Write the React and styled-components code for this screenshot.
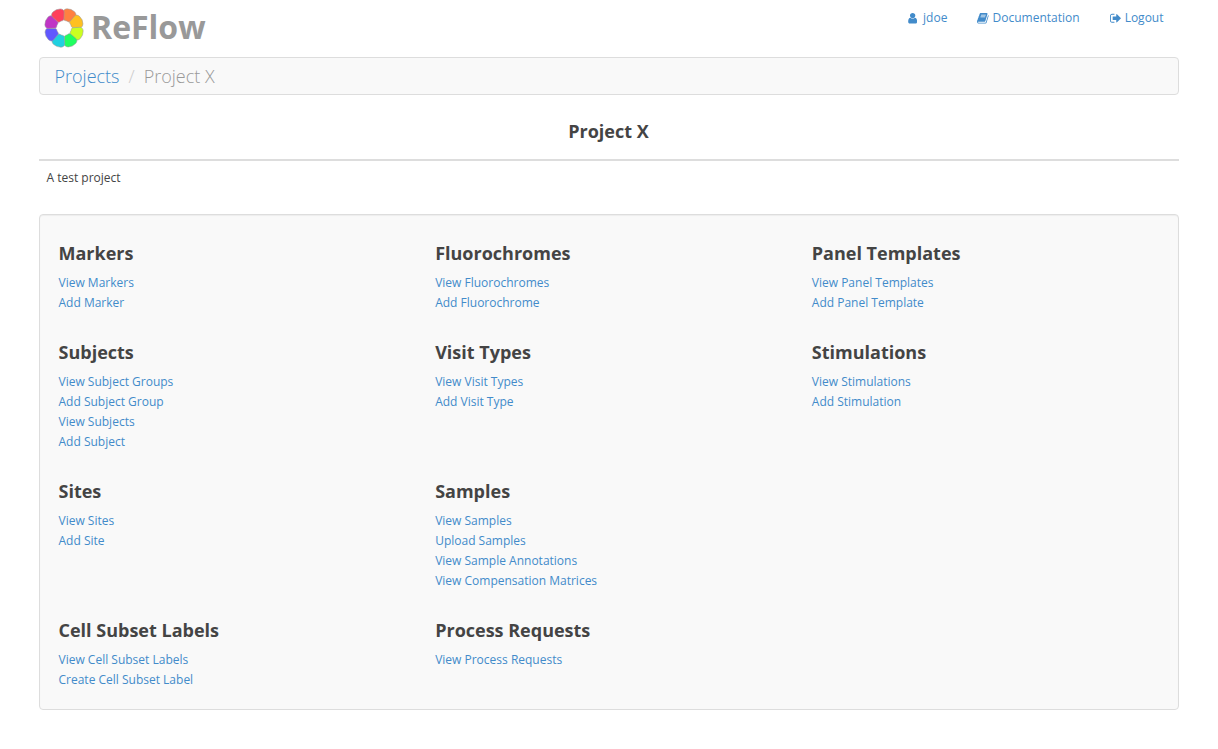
import React from "react";
import styled, { createGlobalStyle } from "styled-components";

const GlobalStyle = createGlobalStyle`
  *, *::before, *::after { box-sizing: border-box; }
  body {
    margin: 0;
    background: #fff;
    color: #444;
    font: 12px/20px "Open Sans", sans-serif;
  }
`;

const Page = styled.div`
  width: 1140px;
  margin: 0 auto;
`;

const Header = styled.header`
  display: flex;
  justify-content: space-between;
  height: 57px;
`;

const Brand = styled.a`
  display: flex;
  padding: 7px 0 0 4px;
  color: #999;
  font-size: 32px;
  font-weight: 700;
  line-height: 40px;
`;

const Logo = styled.svg`
  width: 42px;
  height: 42px;
  margin-right: 6px;
`;

const Nav = styled.nav`
  display: flex;
  gap: 30px;
  padding: 8px 15.5px 0 0;
`;

const Link = styled.a`
  color: #428bca;
  text-decoration: none;
`;

const NavLink = styled(Link)`
  display: flex;
  height: 20px;
`;

const Icon = styled.svg`
  width: ${(p) => p.$width}px;
  height: 12.5px;
  margin: 3.5px ${(p) => p.$gap}px 0 0;
  fill: currentColor;
`;

const Breadcrumb = styled.div`
  display: flex;
  height: 38px;
  padding: 0 14.5px;
  border: 1px solid #ddd;
  border-radius: 4px;
  background: #f9f9f9;
  color: #999;
  font-size: 18px;
  font-weight: 300;
  line-height: 37px;
`;

const Separator = styled.span`
  padding: 0 9px;
  color: #ccc;
`;

const Title = styled.h1`
  margin: 0;
  padding: 26px 1px 0 0;
  height: 66px;
  border-bottom: 2px solid #ddd;
  font-size: 18px;
  font-weight: 700;
  line-height: 20px;
  text-align: center;
`;

const Description = styled.p`
  margin: 7px 0 26px;
  padding-left: 7.5px;
`;

const Panel = styled.main`
  display: grid;
  grid-template-columns: repeat(3, 376.66px);
  row-gap: 29px;
  height: 496px;
  padding: 28px 0 0 18.5px;
  align-content: start;
  border: 1px solid #ddd;
  border-radius: 4px;
  background: #f9f9f9;
  box-shadow: inset 0 1px 1px rgba(0, 0, 0, 0.05);
`;

const Section = styled.section`
  display: flex;
  flex-direction: column;
  align-items: flex-start;
  grid-column: ${(p) => p.$column};
`;

const Heading = styled.h2`
  margin: 0 0 10px;
  font-size: 18px;
  font-weight: 700;
  line-height: 20px;
`;

const petals = [
  ["#ff8040", 21], ["#ffc020", 65], ["#ccff20", 111],
  ["#20ff60", 155], ["#20d0e0", 201], ["#6058ff", 245],
  ["#c035c5", 292], ["#ff405c", 337],
];

const icons = {
  user: {
    box: "256 0 1280 1792", width: 9.3, gap: 5.7,
    d: "M1536 1399q0 109-62.5 187t-150.5 78h-854q-88 0-150.5-78t-62.5-187q0-85 8.5-160.5t31.5-152 58.5-131 94-89 134.5-34.5q131 128 313 128t313-128q76 0 134.5 34.5t94 89 58.5 131 31.5 152 8.5 160.5zm-256-887q0 159-112.5 271.5t-271.5 112.5-271.5-112.5-112.5-271.5 112.5-271.5 271.5-112.5 271.5 112.5 112.5 271.5z",
  },
  book: {
    box: "64 0 1664 1792", width: 11.6, gap: 3.6,
    d: "M1703 478q40 57 18 129l-275 906q-19 64-76.5 107.5t-122.5 43.5h-923q-77 0-148.5-53.5t-99.5-131.5q-24-67-2-127 0-4 3-27t4-37q1-8-3-21.5t-3-19.5q2-11 8-21t16.5-23.5 16.5-23.5q23-38 45-91.5t30-91.5q3-10 .5-30t-.5-28q3-11 17-28t17-23q21-36 42-92t25-90q1-9-2.5-32t.5-28q4-13 22-30.5t22-22.5q19-26 42.5-84.5t27.5-96.5q1-8-3-25.5t-2-26.5q2-8 9-18t18-23 17-21q8-12 16.5-30.5t15-35 16-36 19.5-32 26.5-23.5 36-11.5 47.5 5.5l-1 3q38-9 51-9h761q74 0 114 56t18 130l-274 906q-36 119-71.5 153.5t-128.5 34.5h-869q-27 0-38 15-11 16-1 43 24 70 144 70h923q29 0 56-15.5t35-41.5l300-987q7-22 5-57 38 15 59 43zm-1064 2q-4 13 2 22.5t20 9.5h608q13 0 25.5-9.5t16.5-22.5l21-64q4-13-2-22.5t-20-9.5h-608q-13 0-25.5 9.5t-16.5 22.5zm-83 256q-4 13 2 22.5t20 9.5h608q13 0 25.5-9.5t16.5-22.5l21-64q4-13-2-22.5t-20-9.5h-608q-13 0-25.5 9.5t-16.5 22.5z",
  },
  logout: {
    box: "64 0 1664 1792", width: 11.6, gap: 3.4,
    d: "M704 1440q0 4 1 20t.5 26.5-3 23.5-10 19.5-20.5 6.5h-320q-119 0-203.5-84.5t-84.5-203.5v-704q0-119 84.5-203.5t203.5-84.5h320q13 0 22.5 9.5t9.5 22.5q0 4 1 20t.5 26.5-3 23.5-10 19.5-20.5 6.5h-320q-66 0-113 47t-47 113v704q0 66 47 113t113 47h312l11.5 1 11.5 3 8 5.5 7 9 2 13.5zm928-544q0 26-19 45l-544 544q-19 19-45 19t-45-19-19-45v-288h-448q-26 0-45-19t-19-45v-384q0-26 19-45t45-19h448v-288q0-26 19-45t45-19 45 19l544 544q19 19 19 45z",
  },
};

const navItems = [["user", "jdoe"], ["book", "Documentation"], ["logout", "Logout"]];

const sections = [
  { title: "Markers", column: 1, links: ["View Markers", "Add Marker"] },
  { title: "Fluorochromes", column: 2, links: ["View Fluorochromes", "Add Fluorochrome"] },
  { title: "Panel Templates", column: 3, links: ["View Panel Templates", "Add Panel Template"] },
  { title: "Subjects", column: 1, links: ["View Subject Groups", "Add Subject Group", "View Subjects", "Add Subject"] },
  { title: "Visit Types", column: 2, links: ["View Visit Types", "Add Visit Type"] },
  { title: "Stimulations", column: 3, links: ["View Stimulations", "Add Stimulation"] },
  { title: "Sites", column: 1, links: ["View Sites", "Add Site"] },
  { title: "Samples", column: 2, links: ["View Samples", "Upload Samples", "View Sample Annotations", "View Compensation Matrices"] },
  { title: "Cell Subset Labels", column: 1, links: ["View Cell Subset Labels", "Create Cell Subset Label"] },
  { title: "Process Requests", column: 2, links: ["View Process Requests"] },
];

export default function App() {
  return (
    <>
      <GlobalStyle />
      <Page>
        <Header>
          <Brand>
            <Logo viewBox="-21 -21 42 42">
              {petals.map(([color, angle]) => (
                <path
                  key={color}
                  d="M-3.4 -8.2 L-6.4 -14.6 Q-7 -16 -6.2 -17.2 Q-5.4 -18.4 -4 -19 Q0 -20.6 4 -19 Q5.4 -18.4 6.2 -17.2 Q7 -16 6.4 -14.6 L3.4 -8.2 Q2.8 -7.2 1.8 -7.3 Q0 -7.7 -1.8 -7.3 Q-2.8 -7.2 -3.4 -8.2Z"
                  transform={`rotate(${angle})`}
                  fill={color}
                  stroke="#999"
                  strokeWidth="0.5"
                />
              ))}
            </Logo>
            ReFlow
          </Brand>
          <Nav>
            {navItems.map(([name, label]) => (
              <NavLink key={name}>
                <Icon viewBox={icons[name].box} $width={icons[name].width} $gap={icons[name].gap}>
                  <path d={icons[name].d} />
                </Icon>
                {label}
              </NavLink>
            ))}
          </Nav>
        </Header>
        <Breadcrumb>
          <Link>Projects</Link>
          <Separator>/</Separator>
          <span>Project X</span>
        </Breadcrumb>
        <Title>Project X</Title>
        <Description>A test project</Description>
        <Panel>
          {sections.map(({ title, column, links }) => (
            <Section key={title} $column={column}>
              <Heading>{title}</Heading>
              {links.map((label) => <Link key={label}>{label}</Link>)}
            </Section>
          ))}
        </Panel>
      </Page>
    </>
  );
}
